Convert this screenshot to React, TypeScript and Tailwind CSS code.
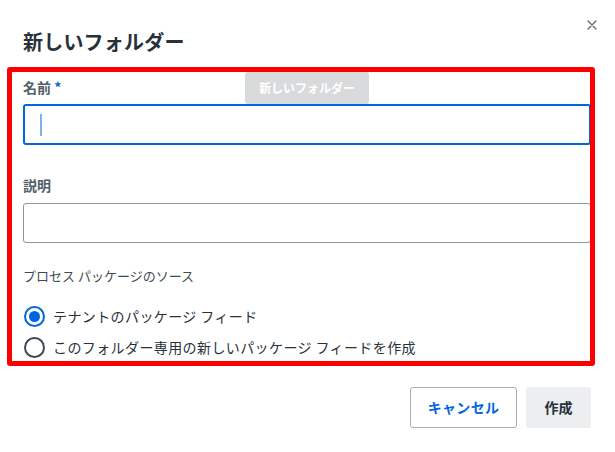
const font = { fontFamily: '"Noto Sans CJK JP", "Noto Sans", sans-serif' };

const Radio = ({ checked, label }: { checked?: boolean; label: string }) => (
  <div className="flex items-center h-6 gap-[8px]">
    <span
      className={
        checked
          ? "w-[21px] h-[21px] rounded-full border-2 border-[#0067df] flex items-center justify-center ml-[1px]"
          : "w-[21px] h-[21px] rounded-full border-2 border-[#3d4a52] ml-[1px]"
      }
    >
      {checked && <span className="w-[11px] h-[11px] rounded-full bg-[#0067df]" />}
    </span>
    <span className="text-[14px] text-[#273139] tracking-[0.4px]">{label}</span>
  </div>
);

export default function App() {
  return (
    <div style={font} className="relative w-[615px] h-[452px] bg-white overflow-hidden">
      <div className="flex flex-col pl-[23px] pr-[24px]">
        <button className="absolute right-[18px] top-[20px] w-[10px] h-[10px]">
          <svg viewBox="0 0 10 10" width="10" height="10">
            <path d="M1 1 L9 9 M9 1 L1 9" stroke="#5f6b73" strokeWidth="1.4" strokeLinecap="round" />
          </svg>
        </button>
        <h1 className="mt-[28px] h-[28px] leading-[28px] text-[20px] font-bold text-[#273139] tracking-[0.2px]">
          新しいフォルダー
        </h1>

        <div className="mt-[21px] h-5 leading-5 text-[14px] font-bold text-[#526069]">
          名前 <span className="text-[#0067df]">*</span>
        </div>
        <div className="mt-[7px] h-[41px] rounded-[3px] border-2 border-[#0067df] flex items-center pl-[15px]">
          <span className="w-[2px] h-[22px] bg-[#7fb1ec]" />
        </div>

        <div className="mt-[30px] h-5 leading-5 text-[14px] font-bold text-[#526069]">説明</div>
        <div className="mt-[8px] h-[40px] rounded-[3px] border border-[#8a959c]" />

        <div className="mt-[24px] h-[18px] leading-[18px] text-[13px] text-[#3d4a52]">
          プロセス パッケージのソース
        </div>
        <div className="mt-[19px] flex flex-col gap-[7px]">
          <Radio checked label="テナントのパッケージ フィード" />
          <Radio label="このフォルダー専用の新しいパッケージ フィードを作成" />
        </div>

        <div className="mt-[28px] flex justify-end gap-[9px]">
          <button className="h-[41px] w-[107px] rounded-[3px] border border-[#a4b1b8] text-[14px] font-bold text-[#0067df] tracking-[0.3px]">
            キャンセル
          </button>
          <button className="h-[41px] w-[65px] rounded-[3px] bg-[#eceef0] text-[14px] font-bold text-[#273139]">
            作成
          </button>
        </div>
      </div>

      <div className="absolute left-[245px] top-[72px] w-[124px] h-[32px] rounded-[3px] bg-[#d9dadc] flex items-center justify-center text-[12px] font-bold text-white">
        新しいフォルダー
      </div>

      <div className="absolute left-[7px] top-[67px] w-[588px] h-[299px] border-[5px] border-[#ff0000] rounded-[3px] pointer-events-none" />
    </div>
  );
}
